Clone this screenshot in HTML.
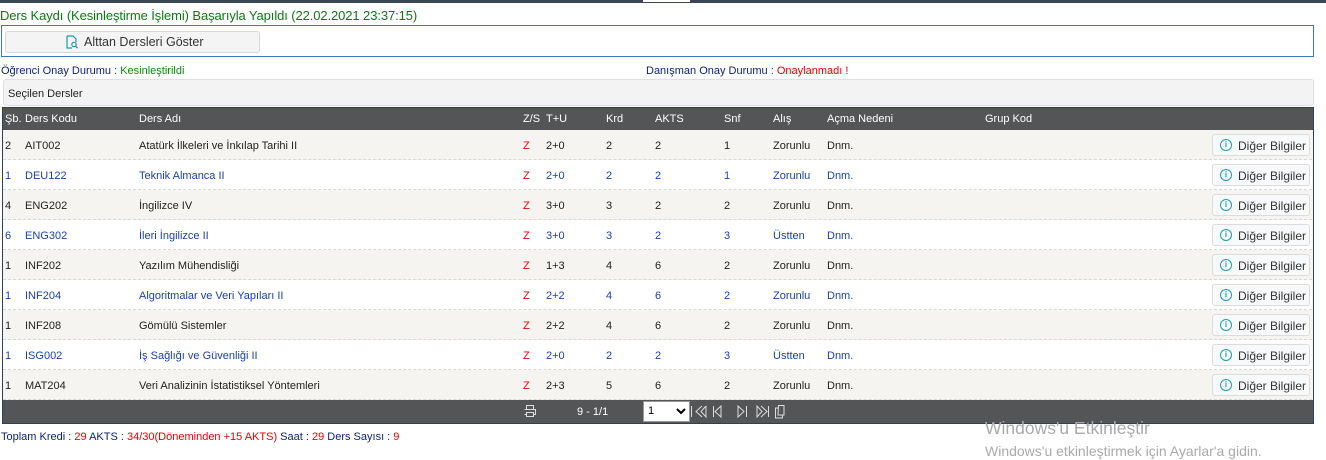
<!DOCTYPE html>
<html><head><meta charset="utf-8"><style>
*{margin:0;padding:0;box-sizing:border-box}
body{width:1326px;height:460px;background:#fff;font-family:"Liberation Sans",sans-serif;font-size:11px;position:relative;overflow:hidden;color:#222}
.a{position:absolute;white-space:nowrap}
.row{position:absolute;left:3px;width:1309px;height:30px;border-bottom:1px dashed #d8d8d8}
.row span{position:absolute;top:10px}
.btn{position:absolute;left:1209px;top:4px;width:98px;height:22px;border:1px solid #dcdcdc;border-radius:3px;background:#f8f9fa;color:#333;font-size:12px}
.btn i{position:absolute;left:7px;top:4px;width:12px;height:12px;border:1.5px solid #19a0b8;border-radius:50%;font-style:normal;color:#19a0b8;font-size:8px;line-height:9px;text-align:center;font-weight:bold}
.btn b{position:absolute;left:25px;top:4px;font-weight:normal}
.hd{position:absolute;top:113px;color:#fff}
</style></head><body>
<div class="a" style="left:0;top:0;width:1326px;height:3px;background:#3a4555"></div>
<div class="a" style="left:643px;top:0;width:47px;height:2px;background:#fff"></div>
<div class="a" style="left:0;top:8px;font-size:13px;color:#0b7a13;letter-spacing:-0.1px">Ders Kaydı (Kesinleştirme İşlemi) Başarıyla Yapıldı (22.02.2021 23:37:15)</div>
<div class="a" style="left:1px;top:25px;width:1313px;height:32px;border:1px solid #3d7ab8"></div>
<div class="a" style="left:5px;top:31px;width:255px;height:22px;border:1px solid #d9d9d9;border-radius:3px;background:#f4f4f4"></div>
<svg class="a" style="left:65px;top:35px" width="14" height="14" viewBox="0 0 14 14"><path d="M2 1h6l3 3v3M2 1v12h5" fill="none" stroke="#1a9ab5" stroke-width="1.2"/><circle cx="9" cy="9.5" r="2.2" fill="none" stroke="#1a9ab5" stroke-width="1.2"/><path d="M10.6 11.2l2 2" stroke="#1a9ab5" stroke-width="1.3"/></svg>
<div class="a" style="left:84px;top:35px;font-size:12.5px;color:#333">Alttan Dersleri Göster</div>
<div class="a" style="left:1px;top:65px;color:#0a1f80">Öğrenci Onay Durumu : <span style="color:#0a8a0a">Kesinleştirildi</span></div>
<div class="a" style="left:646px;top:65px;color:#0a1f80">Danışman Onay Durumu : <span style="color:#e00">Onaylanmadı !</span></div>
<div class="a" style="left:3px;top:79px;width:1311px;height:27px;background:#f3f3f3;border:1px solid #e0e0e0;border-radius:3px"></div>
<div class="a" style="left:8px;top:88px;color:#222">Seçilen Dersler</div>
<div class="a" style="left:2px;top:107px;width:1312px;height:317px;border:1px solid #2a3f6a;background:#f5f4f0"></div>
<div class="a" style="left:3px;top:108px;width:1310px;height:22px;background:#545556"></div>
<span class="a hd" style="left:5px">Şb.</span><span class="a hd" style="left:25px">Ders Kodu</span><span class="a hd" style="left:139px">Ders Adı</span><span class="a hd" style="left:523px">Z/S</span><span class="a hd" style="left:546px">T+U</span><span class="a hd" style="left:606px">Krd</span><span class="a hd" style="left:655px">AKTS</span><span class="a hd" style="left:724px">Snf</span><span class="a hd" style="left:773px">Alış</span><span class="a hd" style="left:827px">Açma Nedeni</span><span class="a hd" style="left:985px">Grup Kod</span>

<div class="row" style="top:130px;background:#f5f4f0;color:#222"><span style="left:2px">2</span><span style="left:22px">AIT002</span><span style="left:136px">Atatürk İlkeleri ve İnkılap Tarihi II</span><span style="left:520px;color:#e00">Z</span><span style="left:543px">2+0</span><span style="left:603px">2</span><span style="left:652px">2</span><span style="left:721px">1</span><span style="left:770px">Zorunlu</span><span style="left:824px">Dnm.</span><div class="btn"><i>i</i><b>Diğer Bilgiler</b></div></div>
<div class="row" style="top:160px;background:#fff;color:#1b3fb0"><span style="left:2px">1</span><span style="left:22px">DEU122</span><span style="left:136px">Teknik Almanca II</span><span style="left:520px;color:#e00">Z</span><span style="left:543px">2+0</span><span style="left:603px">2</span><span style="left:652px">2</span><span style="left:721px">1</span><span style="left:770px">Zorunlu</span><span style="left:824px">Dnm.</span><div class="btn"><i>i</i><b>Diğer Bilgiler</b></div></div>
<div class="row" style="top:190px;background:#f5f4f0;color:#222"><span style="left:2px">4</span><span style="left:22px">ENG202</span><span style="left:136px">İngilizce IV</span><span style="left:520px;color:#e00">Z</span><span style="left:543px">3+0</span><span style="left:603px">3</span><span style="left:652px">2</span><span style="left:721px">2</span><span style="left:770px">Zorunlu</span><span style="left:824px">Dnm.</span><div class="btn"><i>i</i><b>Diğer Bilgiler</b></div></div>
<div class="row" style="top:220px;background:#fff;color:#1b3fb0"><span style="left:2px">6</span><span style="left:22px">ENG302</span><span style="left:136px">İleri İngilizce II</span><span style="left:520px;color:#e00">Z</span><span style="left:543px">3+0</span><span style="left:603px">3</span><span style="left:652px">2</span><span style="left:721px">3</span><span style="left:770px">Üstten</span><span style="left:824px">Dnm.</span><div class="btn"><i>i</i><b>Diğer Bilgiler</b></div></div>
<div class="row" style="top:250px;background:#f5f4f0;color:#222"><span style="left:2px">1</span><span style="left:22px">INF202</span><span style="left:136px">Yazılım Mühendisliği</span><span style="left:520px;color:#e00">Z</span><span style="left:543px">1+3</span><span style="left:603px">4</span><span style="left:652px">6</span><span style="left:721px">2</span><span style="left:770px">Zorunlu</span><span style="left:824px">Dnm.</span><div class="btn"><i>i</i><b>Diğer Bilgiler</b></div></div>
<div class="row" style="top:280px;background:#fff;color:#1b3fb0"><span style="left:2px">1</span><span style="left:22px">INF204</span><span style="left:136px">Algoritmalar ve Veri Yapıları II</span><span style="left:520px;color:#e00">Z</span><span style="left:543px">2+2</span><span style="left:603px">4</span><span style="left:652px">6</span><span style="left:721px">2</span><span style="left:770px">Zorunlu</span><span style="left:824px">Dnm.</span><div class="btn"><i>i</i><b>Diğer Bilgiler</b></div></div>
<div class="row" style="top:310px;background:#f5f4f0;color:#222"><span style="left:2px">1</span><span style="left:22px">INF208</span><span style="left:136px">Gömülü Sistemler</span><span style="left:520px;color:#e00">Z</span><span style="left:543px">2+2</span><span style="left:603px">4</span><span style="left:652px">6</span><span style="left:721px">2</span><span style="left:770px">Zorunlu</span><span style="left:824px">Dnm.</span><div class="btn"><i>i</i><b>Diğer Bilgiler</b></div></div>
<div class="row" style="top:340px;background:#fff;color:#1b3fb0"><span style="left:2px">1</span><span style="left:22px">ISG002</span><span style="left:136px">İş Sağlığı ve Güvenliği II</span><span style="left:520px;color:#e00">Z</span><span style="left:543px">2+0</span><span style="left:603px">2</span><span style="left:652px">2</span><span style="left:721px">3</span><span style="left:770px">Üstten</span><span style="left:824px">Dnm.</span><div class="btn"><i>i</i><b>Diğer Bilgiler</b></div></div>
<div class="row" style="top:370px;background:#f5f4f0;color:#222;height:30px"><span style="left:2px">1</span><span style="left:22px">MAT204</span><span style="left:136px">Veri Analizinin İstatistiksel Yöntemleri</span><span style="left:520px;color:#e00">Z</span><span style="left:543px">2+3</span><span style="left:603px">5</span><span style="left:652px">6</span><span style="left:721px">2</span><span style="left:770px">Zorunlu</span><span style="left:824px">Dnm.</span><div class="btn"><i>i</i><b>Diğer Bilgiler</b></div></div>

<div class="a" style="left:3px;top:400px;width:1310px;height:23px;background:#545556"></div>
<svg class="a" style="left:522px;top:403px" width="16" height="16" viewBox="0 0 16 16" fill="none" stroke="#ddd" stroke-width="1"><path d="M4.5 6V2.5h7V6M2.5 6.5h11v5h-2M4.5 11.5h-2M4.5 9.5h7v4h-7z"/></svg>
<div class="a" style="left:577px;top:406px;color:#fff">9 - 1/1</div>
<div class="a" style="left:643px;top:401px;width:47px;height:21px;background:#fff;border:1px solid #999;font-size:11px;padding:3px 4px;color:#000">1<svg style="position:absolute;right:3px;top:6px" width="10" height="7"><path d="M1 1l4 4 4-4" stroke="#000" stroke-width="2" fill="none"/></svg></div>
<svg class="a" style="left:690px;top:404px" width="105" height="16" fill="none" stroke="#ddd" stroke-width="1"><path d="M1.5 2v11M12 2l-6 5.5 6 5.5M16 2l-5 5.5 5 5.5V2"/><path d="M23.5 2v11M31 2l-6 5.5 6 5.5z"/><path d="M48 2v11l6-5.5zM56.5 2v11"/><path d="M67 2v11l5-5.5zM71 2l6 5.5-6 5.5M78.5 2v11"/><path d="M88 4h-2.5v10h7V11M88.5 1.5h5.5v9.5h-6z"/></svg>
<div class="a" style="left:1px;top:431px;color:#0a1f80">Toplam Kredi : <span style="color:#e00">29</span> AKTS : <span style="color:#e00">34/30(Döneminden +15 AKTS)</span> Saat : <span style="color:#e00">29</span> Ders Sayısı : <span style="color:#e00">9</span></div>
<div class="a" style="left:985px;top:418px;font-size:17.5px;color:#aaa">Windows'u Etkinleştir</div>
<div class="a" style="left:985px;top:443px;font-size:14px;color:#aaa">Windows'u etkinleştirmek için Ayarlar'a gidin.</div>
</body></html>
